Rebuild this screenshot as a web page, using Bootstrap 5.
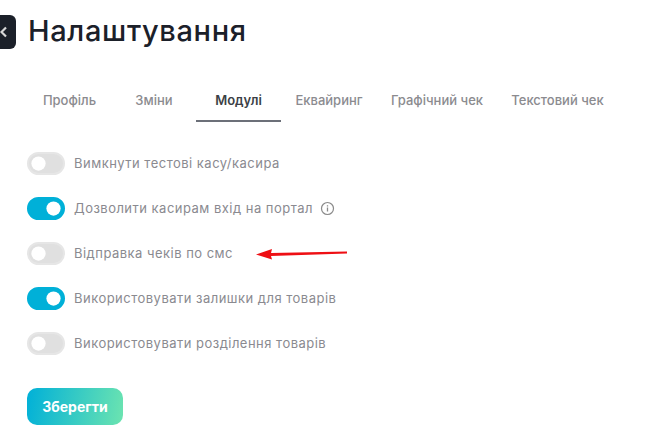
<!DOCTYPE html>
<html lang="uk">
<head>
  <meta charset="UTF-8">
  <title>Налаштування</title>
  <link href="https://cdn.jsdelivr.net/npm/bootstrap@5.3.0/dist/css/bootstrap.min.css" rel="stylesheet">
  <style>
    body { background: #fff; font-family: "Inter", "Liberation Sans", sans-serif; overflow: hidden; }
    .page-head { height: 64px; padding-top: 15px; margin-left: -8px; gap: 12px; }
    .back-btn { width: 24px; height: 34px; background: #1b2029; border-radius: 6px; padding-left: 7px; }
    .page-title { font-size: 29px; font-weight: 500; color: #1b2029; margin: -1px 0 0; letter-spacing: .65px; line-height: 34px; }
    .tabs-row { margin-top: 15px; padding-left: 27px; height: 43px; }
    .tabs-row .nav-link { font-size: 13px; font-weight: 500; color: #8b8b8f; padding: 0; height: 43px; line-height: 43px; text-align: center; white-space: nowrap; }
    .tabs-row .nav-link.active { color: #3b3f46; font-weight: 600; border-bottom: 2px solid #6c7079; }
    .tab-1 { width: 85px; }
    .tab-2 { width: 84px; }
    .tab-3 { width: 85px; }
    .tab-4 { width: 96px; }
    .tab-5 { width: 120px; }
    .tab-6 { width: 121px; }
    .settings-list { margin-top: 30px; margin-left: 27px; gap: 22px; }
    .setting-row { height: 23px; }
    .setting-row .form-check-input { width: 38px; height: 23px; margin: 0 9px 0 0; float: none; border: 2px solid #e6e6e6; background-color: #e0e0e0; box-shadow: none; background-image: url("data:image/svg+xml,%3csvg xmlns='http://www.w3.org/2000/svg' viewBox='-4 -4 8 8'%3e%3ccircle r='3' fill='%23fff'/%3e%3c/svg%3e"); }
    .setting-row .form-check-input:focus { background-image: url("data:image/svg+xml,%3csvg xmlns='http://www.w3.org/2000/svg' viewBox='-4 -4 8 8'%3e%3ccircle r='3' fill='%23fff'/%3e%3c/svg%3e"); border-color: #e6e6e6; box-shadow: none; }
    .setting-row .form-check-input:checked { background-color: #00b0d8; border-color: #00b0d8; }
    .setting-row label { font-size: 13px; color: #8a8a90; letter-spacing: .48px; }
    .info-mark { margin-left: 7px; }
    .red-arrow { margin-left: 23px; }
    .save-btn { margin: 33px 0 0 27px; width: 96px; height: 37px; border: 0; border-radius: 10px; padding: 0; font-size: 14px; font-weight: 700; color: #fff; background: linear-gradient(100deg, #00b0d8, #6ce4b0); }
    .save-btn:hover { color: #fff; }
  </style>
</head>
<body>
  <div class="d-flex align-items-start page-head">
    <div class="d-flex align-items-center back-btn">
      <svg width="9" height="12" viewBox="0 0 9 12"><path d="M7 1.5 2.5 6 7 10.5" fill="none" stroke="#d8d8d8" stroke-width="2.2"/></svg>
    </div>
    <h1 class="page-title">Налаштування</h1>
  </div>

  <ul class="nav flex-nowrap tabs-row">
    <li class="nav-item tab-1"><a class="nav-link" href="#">Профіль</a></li>
    <li class="nav-item tab-2"><a class="nav-link" href="#">Зміни</a></li>
    <li class="nav-item tab-3"><a class="nav-link active" href="#">Модулі</a></li>
    <li class="nav-item tab-4"><a class="nav-link" href="#">Еквайринг</a></li>
    <li class="nav-item tab-5"><a class="nav-link" href="#">Графічний чек</a></li>
    <li class="nav-item tab-6"><a class="nav-link" href="#">Текстовий чек</a></li>
  </ul>

  <div class="d-flex flex-column settings-list">
    <div class="form-switch d-flex align-items-center p-0 setting-row">
      <input class="form-check-input" type="checkbox" id="s1">
      <label for="s1">Вимкнути тестові касу/касира</label>
    </div>
    <div class="form-switch d-flex align-items-center p-0 setting-row">
      <input class="form-check-input" type="checkbox" id="s2" checked>
      <label for="s2">Дозволити касирам вхід на портал</label>
      <svg class="info-mark" width="15" height="15" viewBox="0 0 15 15"><circle cx="7.5" cy="7.5" r="6" fill="none" stroke="#8a8a8a" stroke-width="1.2"/><path d="M7.5 6.6v4M7.5 4.2v1.3" stroke="#8a8a8a" stroke-width="1.3"/></svg>
    </div>
    <div class="form-switch d-flex align-items-center p-0 setting-row">
      <input class="form-check-input" type="checkbox" id="s3">
      <label for="s3">Відправка чеків по смс</label>
      <svg class="red-arrow" width="92" height="14" viewBox="0 0 92 14"><path d="M0 7.5 16 2 15 6 91 4.5 91 6.5 15 9 16 12.5Z" fill="#ee0f14"/></svg>
    </div>
    <div class="form-switch d-flex align-items-center p-0 setting-row">
      <input class="form-check-input" type="checkbox" id="s4" checked>
      <label for="s4">Використовувати залишки для товарів</label>
    </div>
    <div class="form-switch d-flex align-items-center p-0 setting-row">
      <input class="form-check-input" type="checkbox" id="s5">
      <label for="s5">Використовувати розділення товарів</label>
    </div>
  </div>

  <button class="btn save-btn" type="button">Зберегти</button>
  <script src="https://cdn.jsdelivr.net/npm/bootstrap@5.3.0/dist/js/bootstrap.bundle.min.js"></script>
</body>
</html>
